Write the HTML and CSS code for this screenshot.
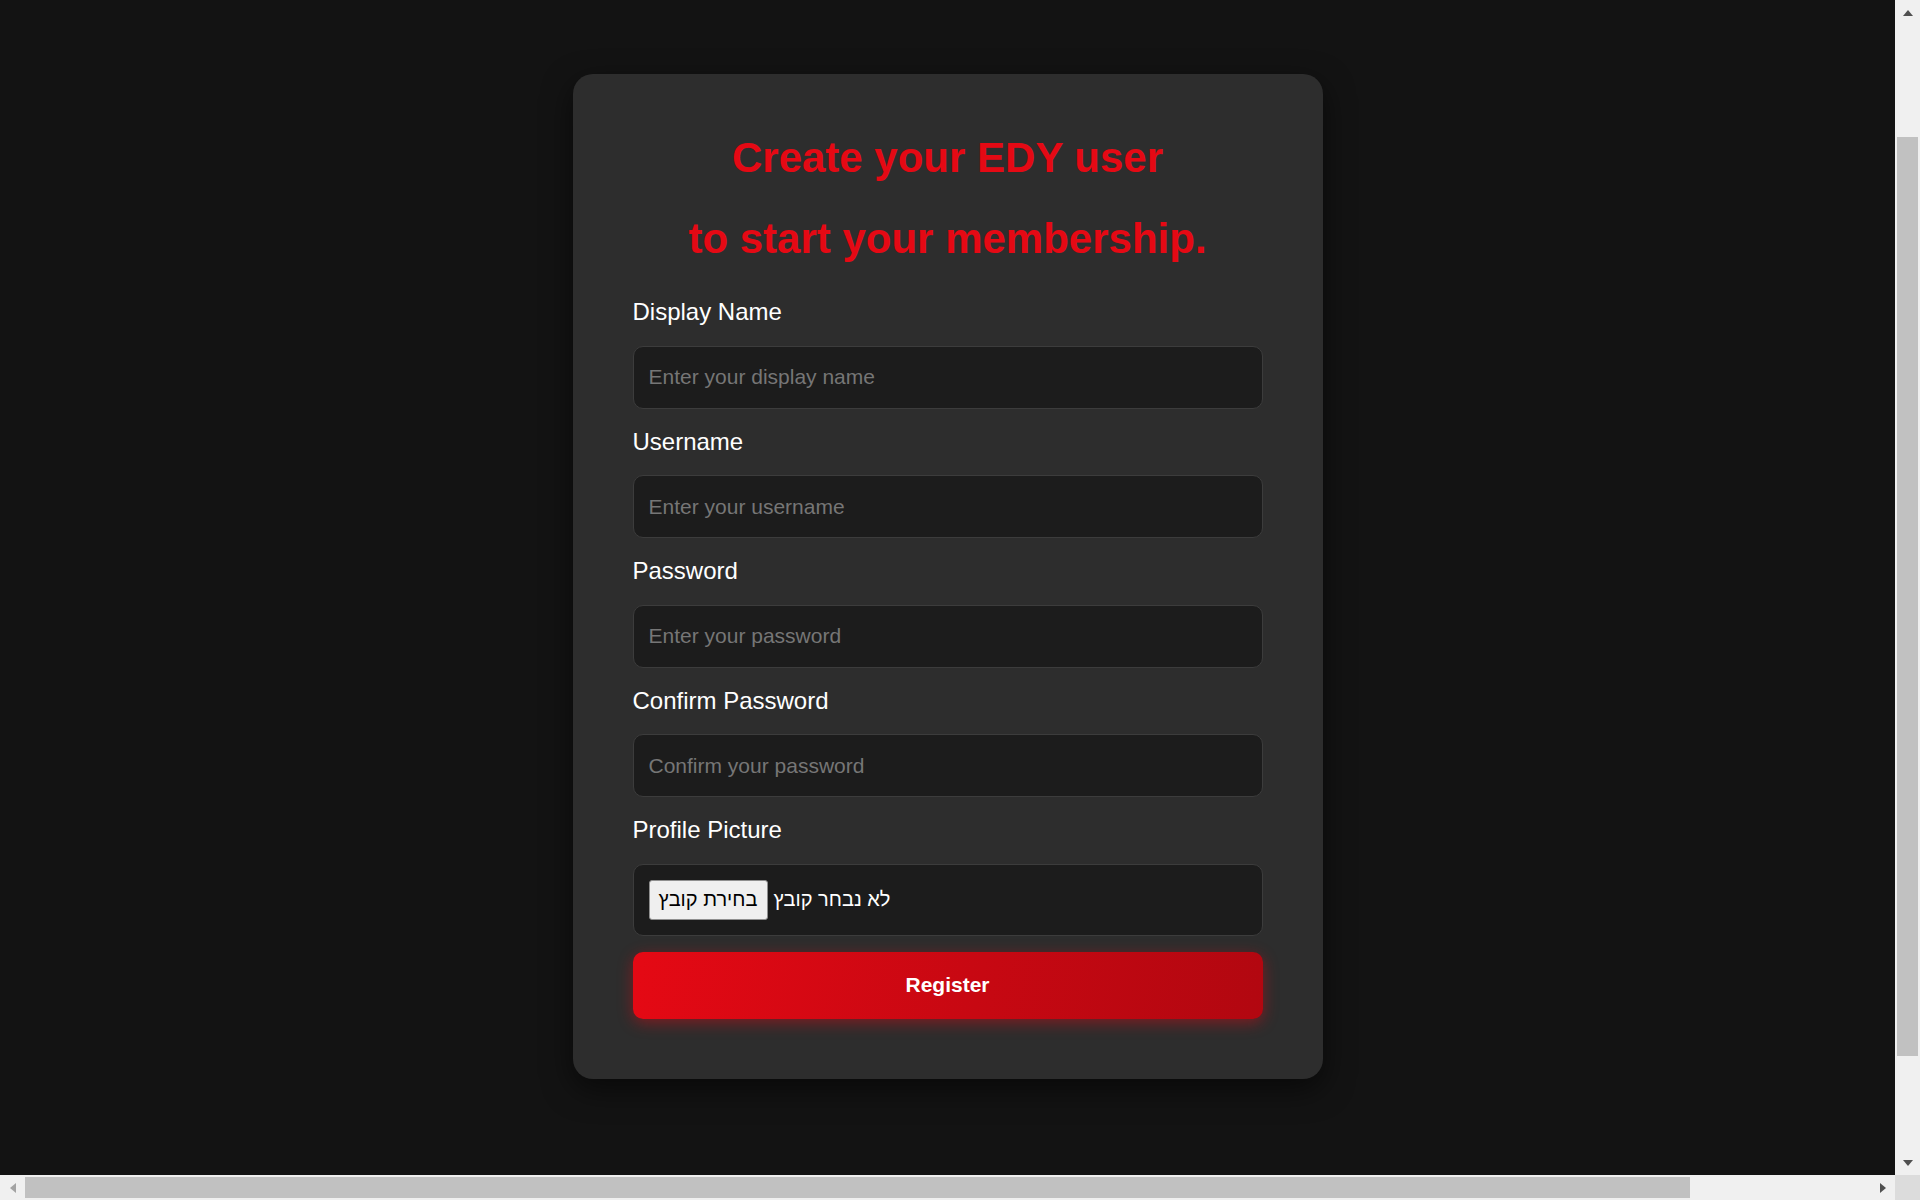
FILE: index.html
```html
<!DOCTYPE html>
<html lang="en">
<head>
<meta charset="utf-8">
<title>Create your EDY user</title>
<link rel="stylesheet" href="styles.css">
</head>
<body>
<div class="screen">
  <main class="viewport">
    <form class="card">
      <h1 class="title">Create your EDY user<br>to start your membership.</h1>

      <div class="field">
        <label class="label" for="displayName">Display Name</label>
        <input class="input" id="displayName" type="text" placeholder="Enter your display name">
      </div>

      <div class="field">
        <label class="label" for="username">Username</label>
        <input class="input" id="username" type="text" placeholder="Enter your username">
      </div>

      <div class="field">
        <label class="label" for="password">Password</label>
        <input class="input" id="password" type="password" placeholder="Enter your password">
      </div>

      <div class="field">
        <label class="label" for="confirm">Confirm Password</label>
        <input class="input" id="confirm" type="password" placeholder="Confirm your password">
      </div>

      <div class="field field-file">
        <span class="label">Profile Picture</span>
        <div class="file-box">
          <label class="file-btn">בחירת קובץ<input class="file-native" type="file" accept="image/*"></label>
          <span class="file-name">לא נבחר קובץ</span>
        </div>
      </div>

      <button class="register" type="button">Register</button>
    </form>
  </main>

  <div class="vbar">
    <div class="sb-btn"><span class="tri tri-up"></span></div>
    <div class="vtrack"><div class="vthumb"></div></div>
    <div class="sb-btn"><span class="tri tri-down"></span></div>
  </div>

  <div class="hbar">
    <div class="sb-btn"><span class="tri tri-left"></span></div>
    <div class="htrack"><div class="hthumb"></div></div>
    <div class="sb-btn"><span class="tri tri-right"></span></div>
  </div>

  <div class="corner"></div>
</div>
</body>
</html>
```

FILE: styles.css
```css
html, body {
  margin: 0;
  padding: 0;
  height: 100%;
  overflow: hidden;
  background: #131313;
  font-family: "Liberation Sans", Arial, "DejaVu Sans", sans-serif;
}

.screen {
  display: grid;
  grid-template-columns: 1fr 25px;
  grid-template-rows: 1fr 25px;
  height: 100vh;
}

.viewport {
  background: #131313;
  display: flex;
  justify-content: center;
  align-items: flex-start;
  padding-top: 74px;
  overflow: hidden;
  min-width: 0;
  min-height: 0;
}

.card {
  box-sizing: border-box;
  width: 750px;
  padding: 43px 60px 60px;
  background: #2d2d2d;
  border-radius: 20px;
  box-shadow: 0 10px 30px rgba(0, 0, 0, 0.55);
}

.title {
  margin: 0 0 20px;
  color: #e50914;
  font-size: 42px;
  font-weight: 700;
  line-height: 81px;
  text-align: center;
}

.field {
  display: flex;
  flex-direction: column;
  margin-bottom: 20px;
}

.field-file {
  margin-bottom: 16px;
}

.label {
  display: block;
  color: #ffffff;
  font-size: 24px;
  line-height: 25.5px;
  margin-bottom: 21px;
}

.input {
  box-sizing: border-box;
  height: 63px;
  width: 100%;
  padding: 0 15px;
  background: #1c1c1c;
  border: 1px solid #3c3c3c;
  border-radius: 10px;
  color: #ffffff;
  font-family: inherit;
  font-size: 21px;
  outline: none;
}

.input::placeholder {
  color: #767676;
}

.file-box {
  box-sizing: border-box;
  height: 72px;
  display: flex;
  align-items: center;
  gap: 6px;
  padding: 0 15px;
  background: #1c1c1c;
  border: 1px solid #3c3c3c;
  border-radius: 10px;
}

.file-btn {
  box-sizing: border-box;
  height: 40px;
  width: 119px;
  display: flex;
  align-items: center;
  justify-content: center;
  background: #efefef;
  border: 1px solid #8f8f8f;
  border-radius: 3px;
  color: #000000;
  font-size: 20px;
  cursor: pointer;
}

.file-native {
  display: none;
}

.file-name {
  color: #ffffff;
  font-size: 20px;
}

.register {
  display: block;
  box-sizing: border-box;
  width: 100%;
  height: 67px;
  border: none;
  border-radius: 10px;
  background: linear-gradient(100deg, #e50914 0%, #c70812 55%, #b20710 100%);
  box-shadow: 0 4px 15px rgba(229, 9, 20, 0.45);
  color: #ffffff;
  font-family: inherit;
  font-size: 21px;
  font-weight: 700;
  cursor: pointer;
}

/* window scrollbars */
.vbar {
  display: flex;
  flex-direction: column;
  background: #f0f0f0;
}

.hbar {
  display: flex;
  background: #f0f0f0;
}

.corner {
  background: #dcdcdc;
}

.sb-btn {
  flex: 0 0 25px;
  height: 25px;
  display: flex;
  align-items: center;
  justify-content: center;
}

.vtrack {
  flex: 1;
  padding-top: 112px;
}

.vthumb {
  height: 919px;
  margin: 0 2px;
  background: #c1c1c1;
}

.htrack {
  flex: 1;
  display: flex;
  align-items: center;
}

.hthumb {
  width: 1665px;
  height: 21px;
  background: #c1c1c1;
}

.tri {
  width: 0;
  height: 0;
}

.tri-up {
  border-left: 5.5px solid transparent;
  border-right: 5.5px solid transparent;
  border-bottom: 6px solid #505050;
}

.tri-down {
  border-left: 5.5px solid transparent;
  border-right: 5.5px solid transparent;
  border-top: 6px solid #505050;
}

.tri-left {
  border-top: 5.5px solid transparent;
  border-bottom: 5.5px solid transparent;
  border-right: 6px solid #a3a3a3;
}

.tri-right {
  border-top: 5.5px solid transparent;
  border-bottom: 5.5px solid transparent;
  border-left: 6px solid #505050;
}
```
